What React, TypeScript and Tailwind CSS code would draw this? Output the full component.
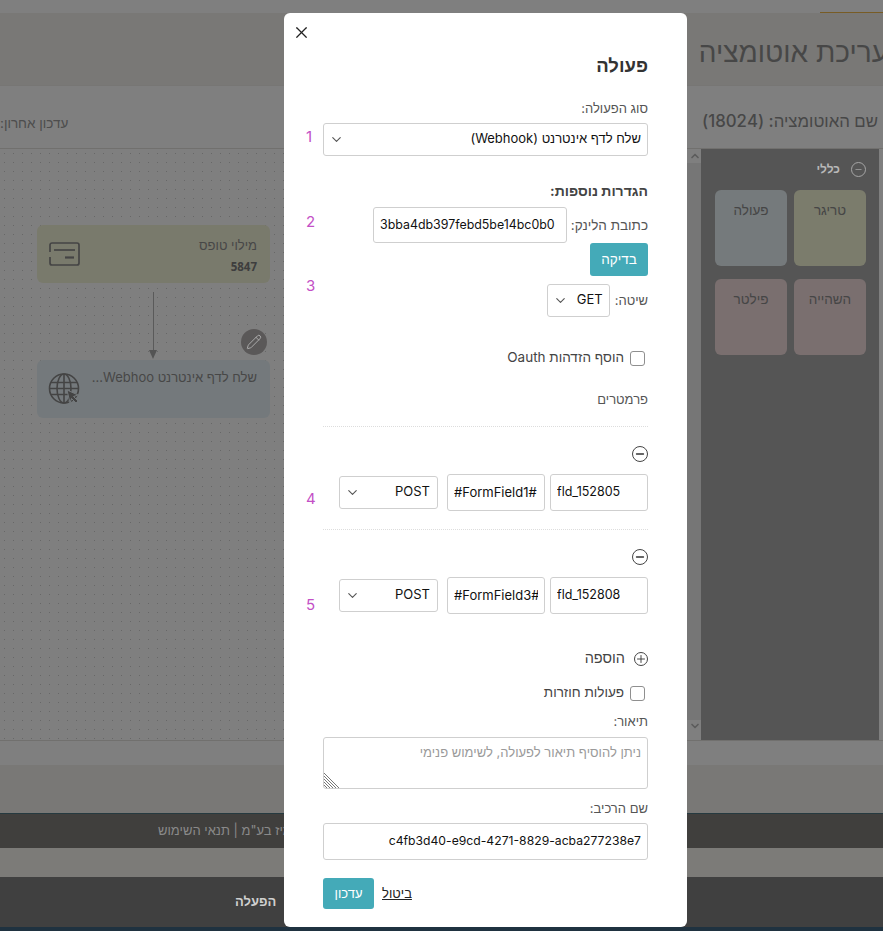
import { ChevronDown, ChevronUp, Minus, Pencil, Plus, X } from "lucide-react";

const FONT = "font-['Inter','Liberation_Sans',sans-serif]";

function Marker({ n, top }: { n: number; top: number }) {
  return (
    <span
      className="absolute left-[22px] text-[15px] leading-5 text-[#c34fc6]"
      style={{ top }}
    >
      {n}
    </span>
  );
}

function Select({ value, className }: { value: string; className: string }) {
  return (
    <div
      className={`flex items-center justify-between rounded-[3px] border border-[#cfcfcf] bg-white text-[13px] text-[#111] ${className}`}
    >
      <span className="-mt-[2px]">{value}</span>
      <ChevronDown size={15} strokeWidth={1.8} className="text-[#555]" />
    </div>
  );
}

function Field({ value, className }: { value: string; className: string }) {
  return (
    <div
      dir="ltr"
      className={`flex items-center overflow-hidden rounded-[3px] border border-[#cfcfcf] bg-white px-[6px] whitespace-nowrap text-[#111] ${className}`}
    >
      <span className="block min-w-0 overflow-hidden">{value}</span>
    </div>
  );
}

function CheckRow({ label, className }: { label: string; className: string }) {
  return (
    <label className={`flex h-[17px] items-center gap-[6px] pr-[3px] text-[13.500px] text-[#444] ${className}`}>
      <input type="checkbox" className="h-[15px] w-[15px] appearance-none rounded-[3px] border border-[#8f8f8f] bg-white" />
      <span className="-mt-[2px]">{label}</span>
    </label>
  );
}

function ParamRow({ field, token }: { field: string; token: string }) {
  return (
    <div className="flex items-start">
      <Field value={field} className="h-[37px] w-[98px] text-[12.500px]" />
      <Field value={token} className="mr-[5px] h-[37px] w-[98px] text-[13px]" />
      <Select value="POST" className="mt-[2px] mr-[9px] h-[33px] w-[99px] pr-[7px] pl-[5px]" />
    </div>
  );
}

function MinusCircle({ className }: { className: string }) {
  return (
    <div className={`flex h-4 w-4 items-center justify-center rounded-full border border-[#444] ${className}`}>
      <Minus size={12} strokeWidth={2.6} className="text-[#333]" />
    </div>
  );
}

function Tile({ label, color }: { label: string; color: string }) {
  return (
    <div className={`h-[76px] w-[72px] rounded-md pt-[10px] text-center text-[13.500px] text-[#8c8c8c] ${color}`}>{label}</div>
  );
}

function Background() {
  return (
    <div className="flex h-full flex-col">
      <div className="flex h-[13px] justify-start bg-white">
        <div className="mt-[12px] h-[2px] w-[63px] bg-[#f0b84a]" />
      </div>
      <div className="flex h-[73px] items-center overflow-hidden border-b border-[#efede8] bg-[#f3f1ec]">
        <h1 className="-mr-[5px] pt-[6px] text-[28px] font-normal whitespace-nowrap text-[#8f8f8f]">עריכת אוטומציה</h1>
      </div>
      <div className="flex h-[63px] items-center justify-between overflow-hidden border-b border-[#e2e0dc] bg-white">
        <span className="mr-[5px] pt-[10px] text-[16.800px] font-medium whitespace-nowrap text-[#8f8f8f]">
          שם האוטומציה: (18024)
        </span>
        <span className="pt-[12px] text-[13.500px] whitespace-nowrap text-[#9a9a9a]">עדכון אחרון:</span>
      </div>
      <div className="flex h-[592px] border-b border-[#e2e0dc]">
        <div className="mr-[4px] w-[178px] bg-[#aaaaaa] pt-[11px] pr-[13px] pl-[14px]">
          <div className="relative z-10 flex items-center gap-[11px] pb-[12px]">
            <div className="flex h-[15px] w-[15px] items-center justify-center rounded-full border border-[#a6a6a6]">
              <Minus size={9} className="text-[#a6a6a6]" />
            </div>
            <span className="text-[12px] font-bold text-[#b8b8b8]">כללי</span>
          </div>
          <div className="grid grid-cols-2 gap-x-[7px] gap-y-[13px]">
            <Tile label="טריגר" color="bg-[#f6f8d8]" />
            <Tile label="פעולה" color="bg-[#eaf4f8]" />
            <Tile label="השהייה" color="bg-[#f4dede]" />
            <Tile label="פילטר" color="bg-[#f4dede]" />
          </div>
        </div>
        <div className="flex w-[16px] flex-col items-end justify-between bg-[#ececec]">
          <div className="w-full bg-white pb-[1px]">
            <ChevronUp size={12} strokeWidth={3.5} className="mt-[1px] text-[#b8b8b8]" />
          </div>
          <div className="w-full bg-white">
            <ChevronDown size={12} strokeWidth={3.5} className="mb-[8px] text-[#b8b8b8]" />
          </div>
        </div>
        <div className="relative flex-1 bg-white bg-[radial-gradient(#cfcfcf_0.6px,transparent_0.7px)] bg-[size:9px_9px]">
          <div className="absolute top-[76px] left-[37px] flex h-[58px] w-[233px] items-center justify-between rounded-md bg-[#f3f4d9] pr-[13px] pl-[12px]">
            <div className="pt-[3px] text-right">
              <div className="text-[13px] text-[#8f8f8f]">מילוי טופס</div>
              <div className="mt-[3px] font-['Open_Sans',sans-serif] text-[11.500px] font-bold text-[#7c7c7c]">5847</div>
            </div>
            <svg width="31" height="24" viewBox="0 0 31 24" fill="none" stroke="#888" strokeWidth="1.7">
              <path d="M1 10V3a2 2 0 0 1 2-2h25a2 2 0 0 1 2 2v18a2 2 0 0 1-2 2H3a2 2 0 0 1-2-2v-6" />
              <path d="M5 8h21" />
              <path d="M16 15.500h9" strokeWidth="2.200" />
            </svg>
          </div>
          <div className="absolute top-[143px] left-[153px] h-[60px] w-[1px] bg-[#b4b4b4]" />
          <div className="absolute top-[201px] left-[149px] h-0 w-0 border-x-[4.500px] border-t-[9px] border-x-transparent border-t-[#a8a8a8]" />
          <div className="absolute top-[180px] left-[241px] flex h-[26px] w-[26px] items-center justify-center rounded-full bg-[#b5b0b0]">
            <Pencil size={16} strokeWidth={1.4} className="relative z-10 text-[#b0b0b0]" />
          </div>
          <div className="absolute top-[211px] left-[37px] flex h-[58px] w-[233px] items-start justify-between rounded-md bg-[#e9f3f8] pt-[8px] pr-[13px] pl-[11px]">
            <div className="text-[13px] whitespace-nowrap text-[#8f8f8f]">שלח לדף אינטרנט Webhoo...</div>
            <svg width="32" height="33" viewBox="0 0 32 33" fill="none" stroke="#888" strokeWidth="1.600" className="mt-[4px]">
              <circle cx="16" cy="16.500" r="14.500" />
              <ellipse cx="16" cy="16.500" rx="7" ry="14.500" />
              <path d="M16 2v29M3 10.500h26M1.500 16.500h29M3 22.500h26" />
              <path d="M19 18l11 5-4.500 1.500 4.500 4.500-2 2-4.500-4.500L22 31z" fill="#888" stroke="#e9f3f8" strokeWidth="1" />
            </svg>
          </div>
        </div>
      </div>
      <div className="h-[24px] bg-white" />
      <div className="h-[48px] bg-[#f3f1ec]" />
      <div className="flex h-[35px] items-center justify-end border-t border-[#4d7480] bg-[#807e7a] pl-[158px]">
        <span className="relative z-10 text-[13px] whitespace-nowrap text-[#8a8a8a]">כל הזכויות שמורות לאוטומיז בע"מ | תנאי השימוש</span>
      </div>
      <div className="h-[29px] bg-[#f8f6f1]" />
      <div className="flex h-[50px] items-center justify-end bg-[#808080] pl-[235px]">
        <span className="relative z-10 text-[13px] font-bold text-[#cfcfcf]">הפעלה</span>
      </div>
      <div className="h-[4px] bg-[#3f6480]" />
    </div>
  );
}

function Modal() {
  return (
    <div className="absolute top-[13px] left-[284px] z-20 h-[914px] w-[403px] rounded-md bg-white px-[39px]">
      <button className="absolute top-[10px] left-[8px] text-[#222]">
        <X size={19} strokeWidth={1.5} />
      </button>
      <Marker n={1} top={114} />
      <Marker n={2} top={199} />
      <Marker n={3} top={263} />
      <Marker n={4} top={476} />
      <Marker n={5} top={582} />

      <h2 className="pt-[41px] text-[18.500px] leading-[22px] font-bold text-[#333]">פעולה</h2>
      <div className="mt-[23px] text-[13px] leading-[18px] text-[#555]">סוג הפעולה:</div>
      <Select value="שלח לדף אינטרנט (Webhook)" className="mt-[6px] h-[33px] pr-[6px] pl-[5px]" />

      <div className="mt-[26px] text-[14px] leading-[18px] font-bold text-[#444]">הגדרות נוספות:</div>
      <div className="mt-[7px] flex items-center">
        <span className="w-[81px] text-[13.500px] whitespace-nowrap text-[#555]">כתובת הלינק:</span>
        <Field value="3bba4db397febd5be14bc0b0" className="h-[36px] w-[194px] text-[12.400px]" />
      </div>
      <button className="block h-[33px] w-[58px] rounded-[3px] bg-[#44aab8] text-[13.500px] text-white">בדיקה</button>
      <div className="mt-[8px] flex items-center gap-[5px]">
        <span className="text-[13px] text-[#555]">שיטה:</span>
        <Select value="GET" className="h-[33px] w-[63px] pr-[6px] pl-[5px]" />
      </div>

      <CheckRow label="הוסף הזדהות Oauth" className="mt-[33px]" />
      <div className="mt-[23px] text-[13px] leading-[18px] text-[#555]">פרמטרים</div>

      <div className="mt-[18px] border-t border-dotted border-[#ddd] pt-[19px]">
        <MinusCircle className="mb-[12px]" />
        <ParamRow field="fld_152805" token="#FormField1#" />
      </div>
      <div className="mt-[18px] border-t border-dotted border-[#ddd] pt-[19px]">
        <MinusCircle className="mb-[12px]" />
        <ParamRow field="fld_152808" token="#FormField3#" />
      </div>

      <div className="mt-[36px] flex h-[17px] items-center gap-[9px]">
        <div className="flex h-[14px] w-[14px] items-center justify-center rounded-full border border-[#444]">
          <Plus size={12} strokeWidth={1.8} className="text-[#333]" />
        </div>
        <span className="-mt-[1px] text-[14.500px] text-[#444]">הוספה</span>
      </div>
      <CheckRow label="פעולות חוזרות" className="mt-[18px]" />
      <div className="mt-[10px] text-[13px] leading-[18px] text-[#555]">תיאור:</div>
      <div className="relative mt-[7px] h-[52px] rounded-[3px] border border-[#cfcfcf] bg-white px-[6px] pt-[5px] text-[13px] text-[#9a9a9a]">
        ניתן להוסיף תיאור לפעולה, לשימוש פנימי
        <svg width="15" height="15" viewBox="0 0 15 15" stroke="#777" strokeWidth="1" className="absolute bottom-0 left-0">
          <path d="M0 3l12 12M0 6l9 9M0 9l6 6M0 12l3 3M0 0l15 15" />
        </svg>
      </div>
      <div className="mt-[10px] text-[13px] leading-[18px] text-[#555]">שם הרכיב:</div>
      <div className="mt-[6px] flex h-[37px] items-center justify-start rounded-[3px] border border-[#cfcfcf] bg-white px-[6px] text-[12.200px] text-[#111]">
        c4fb3d40-e9cd-4271-8829-acba277238e7
      </div>
      <div className="mt-[18px] flex items-center justify-end gap-[8px]">
        <a className="text-[13px] text-[#222] underline">ביטול</a>
        <button className="h-[31px] w-[51px] rounded-[3px] bg-[#44aab8] text-[13px] text-white">עדכון</button>
      </div>
    </div>
  );
}

export default function App() {
  return (
    <div dir="rtl" className={`relative h-[931px] w-[883px] overflow-hidden bg-white ${FONT}`}>
      <Background />
      <div className="absolute inset-0 bg-black/50" />
      <Modal />
    </div>
  );
}
